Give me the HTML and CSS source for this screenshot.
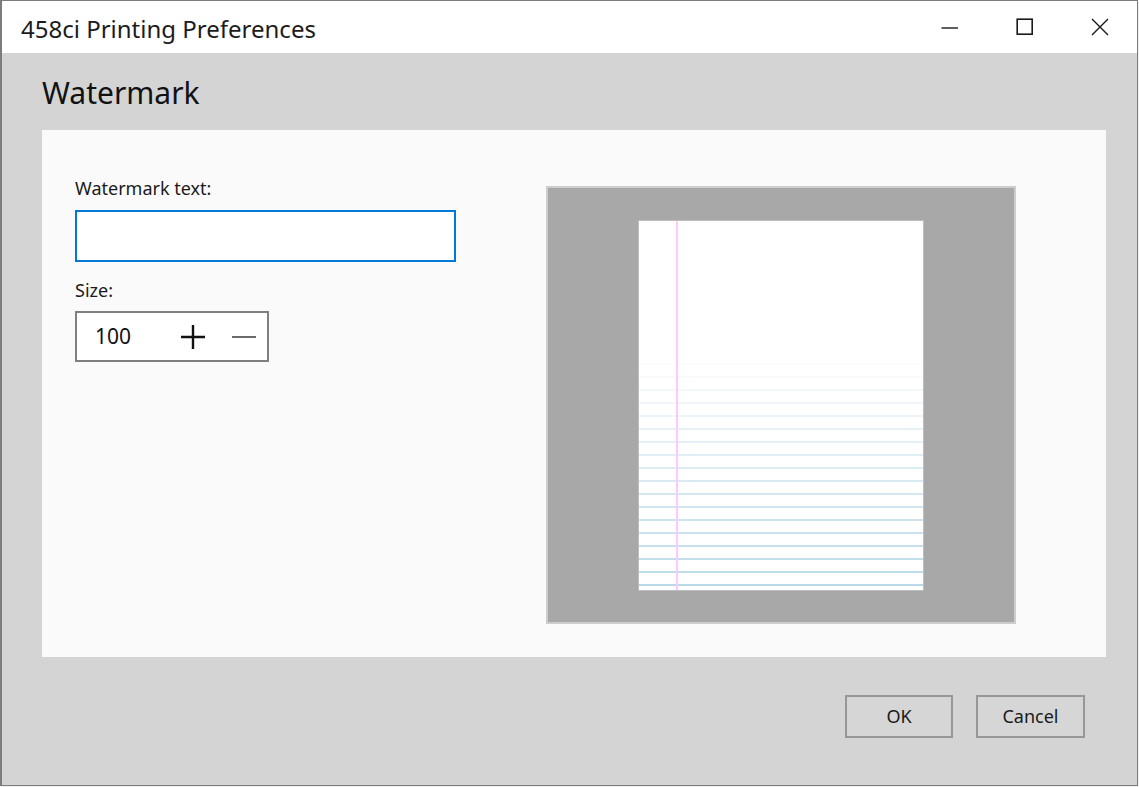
FILE: index.html
```html
<!DOCTYPE html>
<html lang="en">
<head>
<meta charset="utf-8">
<title>458ci Printing Preferences</title>
<link rel="stylesheet" href="styles.css">
</head>
<body>
<div class="window">
  <div class="titlebar">
    <div class="title">458ci Printing Preferences</div>
    <div class="caption-buttons">
      <div class="cap-btn">
        <svg width="18" height="18" viewBox="0 0 18 18"><path d="M0.5 10 H17" stroke="#1a1a1a" stroke-width="1.4" fill="none"/></svg>
      </div>
      <div class="cap-btn">
        <svg width="18" height="18" viewBox="0 0 18 18"><rect x="1.2" y="1.2" width="15" height="15" stroke="#1a1a1a" stroke-width="1.6" fill="none"/></svg>
      </div>
      <div class="cap-btn">
        <svg width="18" height="18" viewBox="0 0 18 18"><path d="M1 1 L17 17 M17 1 L1 17" stroke="#1a1a1a" stroke-width="1.4" fill="none"/></svg>
      </div>
    </div>
  </div>
  <div class="body">
    <h1 class="heading">Watermark</h1>
    <div class="panel">
      <div class="form">
        <label class="label">Watermark text:</label>
        <div class="text-input"></div>
        <label class="label size-label">Size:</label>
        <div class="spinner">
          <span class="spin-value">100</span>
          <svg class="spin-plus" width="26" height="26" viewBox="0 0 26 26"><path d="M1 13 H25 M13 1 V25" stroke="#111" stroke-width="2.4" fill="none"/></svg>
          <svg class="spin-minus" width="26" height="26" viewBox="0 0 26 26"><path d="M1 13 H25" stroke="#6a6a6a" stroke-width="2" fill="none"/></svg>
        </div>
      </div>
      <div class="preview">
        <div class="page">
          <div class="ruled"></div>
          <div class="margin-line"></div>
        </div>
      </div>
    </div>
    <div class="footer">
      <button class="btn">OK</button>
      <button class="btn btn-cancel">Cancel</button>
    </div>
  </div>
</div>
</body>
</html>
```
FILE: styles.css
```css
* { box-sizing: border-box; }
html, body {
  margin: 0;
  padding: 0;
  background: #f0f0f0;
}
body {
  font-family: "Noto Sans", "Open Sans", sans-serif;
  color: #1a1a1a;
  width: 1139px;
  height: 787px;
  overflow: hidden;
}
.window {
  width: 1138px;
  height: 786px;
  border: 1px solid #7c7c7c;
  border-left-width: 2px;
  display: flex;
  flex-direction: column;
  background: #d4d4d4;
}
.titlebar {
  height: 52px;
  background: #ffffff;
  display: flex;
  align-items: center;
  justify-content: space-between;
  flex-shrink: 0;
}
.title {
  padding-left: 19px;
  font-size: 24px;
  color: #1c1c1c;
  padding-top: 3px;
}
.caption-buttons {
  display: flex;
  height: 100%;
}
.cap-btn {
  width: 75px;
  height: 100%;
  display: flex;
  align-items: center;
  justify-content: center;
}
.body {
  flex: 1;
  display: flex;
  flex-direction: column;
  padding: 0 31px 0 40px;
}
.heading {
  margin: 0;
  font-weight: normal;
  font-size: 30px;
  line-height: 38px;
  padding-top: 21px;
  height: 77px;
  color: #111;
}
.panel {
  height: 527px;
  background: #fafafa;
  display: flex;
  justify-content: space-between;
  padding: 46px 90px 0 33px;
}
.form {
  width: 381px;
  display: flex;
  flex-direction: column;
}
.label {
  font-size: 18px;
  line-height: 24px;
  color: #1a1a1a;
}
.text-input {
  margin-top: 10px;
  height: 52px;
  border: 2px solid #0078d7;
  background: #ffffff;
}
.size-label {
  margin-top: 16px;
}
.spinner {
  margin-top: 9px;
  width: 194px;
  height: 51px;
  border: 2px solid #7f7f7f;
  background: #ffffff;
  display: flex;
  align-items: center;
  padding-left: 18px;
}
.spin-value {
  font-size: 21px;
  width: 85px;
  color: #111;
  padding-bottom: 2px;
}
.spin-minus { margin-left: 25px; }
.preview {
  margin-top: 10px;
  width: 470px;
  height: 438px;
  border: 2px solid #cdcdcd;
  background: #a8a8a8;
  display: flex;
  align-items: center;
  justify-content: center;
}
.page {
  position: relative;
  width: 286px;
  height: 371px;
  background: #ffffff;
  border: 1px solid #bdbdbd;
  display: flex;
  flex-direction: column;
  justify-content: flex-end;
}
.ruled {
  height: 231px;
  background: repeating-linear-gradient(to bottom, transparent 0, transparent 4px, #b9d9e8 4px, #b9d9e8 6px, transparent 6px, transparent 13px);
  -webkit-mask-image: linear-gradient(to bottom, rgba(0,0,0,0.05), rgba(0,0,0,1));
  mask-image: linear-gradient(to bottom, rgba(0,0,0,0.05), rgba(0,0,0,1));
}
.margin-line {
  position: absolute;
  top: 0;
  bottom: 0;
  left: 37px;
  width: 2px;
  background: #ffc8ff;
}
.footer {
  flex: 1;
  display: flex;
  justify-content: flex-end;
  gap: 23px;
  padding-top: 38px;
  padding-right: 21px;
}
.btn {
  width: 108px;
  height: 43px;
  border: 2px solid #979797;
  background: #d6d6d6;
  font-family: "Noto Sans", "Open Sans", sans-serif;
  font-size: 18px;
  color: #1a1a1a;
  padding: 0 0 2px 0;
}
.btn-cancel { width: 109px; }
```
